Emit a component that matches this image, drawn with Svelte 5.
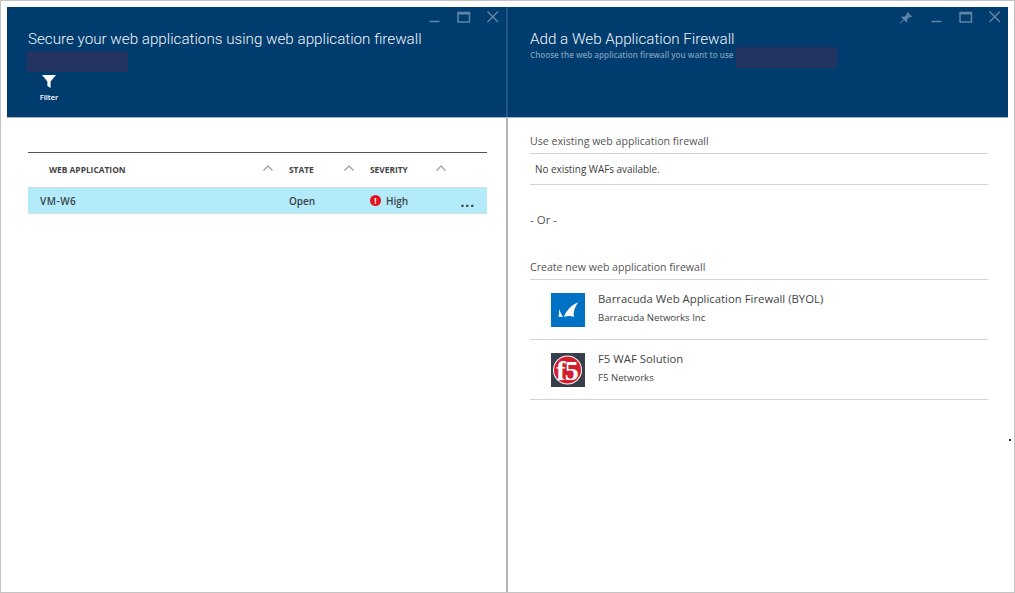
<script>
  const columns = [
    { label: "WEB APPLICATION", cls: "col-app" },
    { label: "STATE", cls: "col-state" },
    { label: "SEVERITY", cls: "col-severity" }
  ];

  const offers = [
    { name: "Barracuda Web Application Firewall (BYOL)", vendor: "Barracuda Networks Inc", logo: "barracuda" },
    { name: "F5 WAF Solution", vendor: "F5 Networks", logo: "f5" }
  ];
</script>

<div class="window">
  <section class="blade left">
    <header class="head">
      <div class="controls">
        <svg width="12" height="12" viewBox="0 0 12 12"><path d="M.5 10.500h10" /></svg>
        <svg width="14" height="12" viewBox="0 0 14 12"><path d="M1 1.500h11.500v9.500h-11.500z M1 2.800h11.500" /></svg>
        <svg width="12" height="12" viewBox="0 0 12 12"><path d="M.5 .5l10.500 10.500M11 .5L.5 11" /></svg>
      </div>
      <h1>Secure your web applications using web application firewall</h1>
      <div class="redact"></div>
      <div class="command">
        <svg width="14" height="13" viewBox="0 0 14 13"><path class="solid" d="M0 0h14L8.600 6.500V13L5.400 11V6.500z" /></svg>
        <span>Filter</span>
      </div>
    </header>

    <div class="body">
      <div class="grid headrow">
        {#each columns as col}
          <div class="th {col.cls}">
            <span>{col.label}</span>
            <svg width="10" height="6" viewBox="0 0 10 6"><path d="M.5 5.500L5 1l4.500 4.500" /></svg>
          </div>
        {/each}
      </div>
      <div class="grid row">
        <div class="name">VM-W6</div>
        <div>Open</div>
        <div class="severity">
          <span class="alert">!</span>
          <span>High</span>
          <span class="more">...</span>
        </div>
      </div>
    </div>
  </section>

  <div class="divider"></div>

  <section class="blade right">
    <header class="head">
      <div class="controls">
        <svg class="pin" width="12" height="12" viewBox="0 0 12 12"><path class="solid" d="M7.500 0L12 4.500 10.800 5.400 9.600 5 7 7.600 7.200 9.800 6.300 10.600 4 8 .8 11.600 0 11 3.500 7.500 1.200 5.300 2 4.500 4.300 4.800 7 2.200 6.700 1z" /></svg>
        <svg width="12" height="12" viewBox="0 0 12 12"><path d="M.5 10.500h10" /></svg>
        <svg width="14" height="12" viewBox="0 0 14 12"><path d="M1 1.500h11.500v9.500h-11.500z M1 2.800h11.500" /></svg>
        <svg width="12" height="12" viewBox="0 0 12 12"><path d="M.5 .5l10.500 10.500M11 .5L.5 11" /></svg>
      </div>
      <h1>Add a Web Application Firewall</h1>
      <div class="sub">
        <span>Choose the web application firewall you want to use</span>
        <div class="redact"></div>
      </div>
    </header>

    <div class="body">
      <h2>Use existing web application firewall</h2>
      <p class="empty">No existing WAFs available.</p>
      <p class="or">- Or -</p>
      <h2>Create new web application firewall</h2>
      {#each offers as offer}
        <div class="offer">
          {#if offer.logo === "barracuda"}
            <svg class="logo" width="34" height="34" viewBox="0 0 34 34">
              <rect width="34" height="34" fill="#0072c6" />
              <path fill="#fff" d="M13 24C15 18 20 12 27 9.500 24 14 22 19 23 24 20 22.500 16 22.500 13 24Z" />
              <path fill="#fff" d="M8 15.500C8.300 19 8 22 7.500 24 9 23.500 10.500 23.500 12 24 10.500 21.500 9 19 8 15.500Z" />
            </svg>
          {:else}
            <svg class="logo" width="34" height="34" viewBox="0 0 34 34">
              <rect width="34" height="34" fill="#383e4b" />
              <circle cx="16.500" cy="17" r="14.500" fill="#fff" />
              <circle cx="16.500" cy="17" r="13.500" fill="#d11f30" />
              <text x="16" y="26.500" text-anchor="middle" class="f5">f5</text>
              <circle cx="32" cy="25" r="0.800" fill="#d11f30" />
            </svg>
          {/if}
          <div class="offer-text">
            <div class="offer-name">{offer.name}</div>
            <div class="offer-vendor">{offer.vendor}</div>
          </div>
        </div>
      {/each}
    </div>
  </section>

  <i class="speck"></i>
</div>

<style>
  :global(body) {
    margin: 0;
    background: #fff;
  }

  .window {
    position: relative;
    box-sizing: border-box;
    width: 1015px;
    height: 593px;
    padding: 6px 6px 0;
    display: flex;
    border: 1px solid #c3c3c3;
    font-family: "Open Sans", sans-serif;
    color: #3c3c3c;
    background: #fff;
  }

  .blade.left {
    width: 499px;
  }

  .blade.right {
    width: 500px;
  }

  .divider {
    width: 2px;
    background: linear-gradient(#1f5685 110px, #b4b4b4 110px);
  }

  .head {
    box-sizing: border-box;
    height: 111px;
    background: #003c6e;
    border-bottom: 1px solid #a9b4bf;
    color: #fff;
  }

  .right .head {
    padding-left: 22px;
  }

  .left .head {
    padding-left: 20px;
  }

  .controls {
    display: flex;
    justify-content: flex-end;
    gap: 16px;
    height: 21px;
    padding: 4px 7px 0 0;
    box-sizing: border-box;
  }

  .controls svg {
    fill: none;
    stroke: #5f84a6;
    stroke-width: 1.500;
  }

  .controls .solid {
    fill: #5f84a6;
    stroke: none;
  }

  .controls .pin {
    margin-right: 3px;
    margin-top: 1px;
  }

  h1 {
    margin: 0;
    font-family: Roboto, sans-serif;
    font-size: 15.200px;
    font-weight: 300;
    line-height: 23px;
    white-space: nowrap;
    color: #f2f6fa;
  }

  .left h1 {
    margin-left: 1px;
  }

  .redact {
    width: 101px;
    height: 21px;
    background: #22345f;
  }

  .command {
    width: 44px;
    margin-top: 3px;
    display: flex;
    flex-direction: column;
    align-items: center;
    gap: 4px;
    font-size: 7.500px;
    font-weight: 600;
  }

  .command svg {
    fill: #fff;
  }

  .sub {
    display: flex;
    align-items: flex-start;
    gap: 2px;
    font-size: 8.100px;
    font-weight: 600;
    color: #7b9dbb;
    margin-top: -4px;
  }

  .sub span {
    padding-top: 1px;
    line-height: 14px;
    white-space: nowrap;
  }

  .left .body {
    padding: 34px 19px 0 21px;
  }

  .grid {
    display: grid;
    grid-template-columns: 261px 81px 1fr;
    align-items: center;
  }

  .headrow {
    height: 35px;
    padding-bottom: 2px;
    border-top: 1px solid #555;
    box-sizing: border-box;
    font-size: 8.400px;
    font-weight: 700;
    color: #444;
  }

  .th {
    display: flex;
    justify-content: space-between;
    align-items: center;
    padding-right: 16px;
  }

  .th svg {
    fill: none;
    stroke: #9a9a9a;
    stroke-width: 1.200;
    margin-top: -2px;
  }

  .col-app {
    padding-left: 21px;
  }

  .col-severity {
    padding-right: 41px;
  }

  .row {
    height: 27px;
    background: #b3ebfb;
    border-top: 1px solid #cfdfe5;
    border-bottom: 1px solid #cfdfe5;
    box-sizing: border-box;
    font-size: 10px;
    font-weight: 600;
    color: #3c4448;
  }

  .name {
    padding-left: 12px;
    letter-spacing: 0.500px;
  }

  .severity {
    display: flex;
    align-items: center;
    gap: 5px;
  }

  .alert {
    width: 11px;
    height: 11px;
    border-radius: 50%;
    background: #e3101e;
    color: #fff;
    font-size: 8px;
    font-weight: 700;
    line-height: 11px;
    text-align: center;
  }

  .more {
    margin-left: auto;
    margin-right: 12px;
    padding-top: 3px;
    font-size: 13.500px;
    font-weight: 700;
    line-height: 14px;
    letter-spacing: 1px;
    color: #333;
  }

  .right .body {
    padding: 15px 20px 0 22px;
  }

  h2 {
    margin: 0;
    height: 20px;
    font-size: 10.600px;
    font-weight: 400;
    line-height: 17px;
    color: #555;
    border-bottom: 1px solid #d4d4d4;
  }

  .empty {
    margin: 0;
    height: 30px;
    padding-left: 5px;
    font-size: 9.900px;
    line-height: 31px;
    color: #3c3c3c;
    border-bottom: 1px solid #d4d4d4;
  }

  .or {
    margin: 0;
    height: 74px;
    padding-top: 27px;
    box-sizing: border-box;
    font-size: 11.500px;
    line-height: 15px;
    color: #555;
  }

  .offer {
    display: flex;
    align-items: center;
    gap: 13px;
    height: 60px;
    padding-left: 21px;
    box-sizing: border-box;
    border-bottom: 1px solid #d4d4d4;
  }

  .logo {
    flex: none;
  }

  .f5 {
    font-family: "Liberation Serif", serif;
    font-size: 28px;
    font-weight: 700;
    fill: #fff;
    letter-spacing: -1px;
  }

  .offer-text {
    margin-top: -2px;
  }

  .offer-name {
    font-size: 11.350px;
    line-height: 18px;
    color: #444;
  }

  .offer-vendor {
    padding-top: 1px;
    font-size: 9.600px;
    line-height: 18px;
    color: #444;
  }

  .speck {
    position: absolute;
    left: 1008px;
    top: 438px;
    width: 2px;
    height: 2px;
    background: #222;
  }
</style>
